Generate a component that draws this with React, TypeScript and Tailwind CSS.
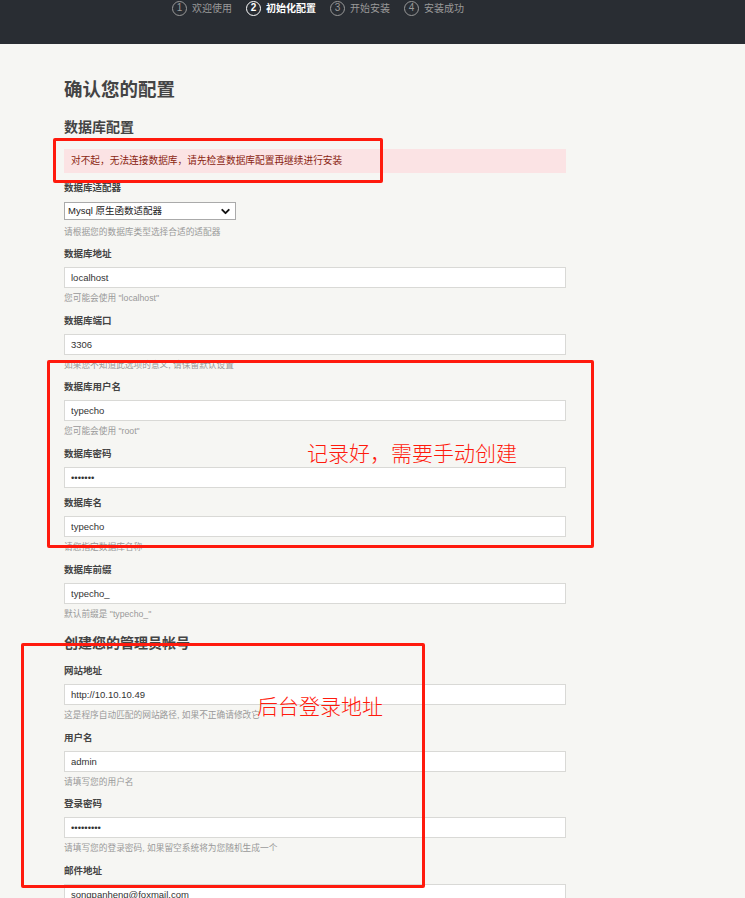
import { ChevronDown } from "lucide-react";

interface Field {
  label: string;
  value: string;
  desc?: string;
  password?: boolean;
}

const dbFields: Field[] = [
  { label: "数据库地址", value: "localhost", desc: '您可能会使用 "localhost"' },
  { label: "数据库端口", value: "3306", desc: "如果您不知道此选项的意义, 请保留默认设置" },
  { label: "数据库用户名", value: "typecho", desc: '您可能会使用 "root"' },
  { label: "数据库密码", value: "1234567", password: true },
  { label: "数据库名", value: "typecho", desc: "请您指定数据库名称" },
  { label: "数据库前缀", value: "typecho_", desc: '默认前缀是 "typecho_"' },
];

const adminFields: Field[] = [
  { label: "网站地址", value: "http://10.10.10.49", desc: "这是程序自动匹配的网站路径, 如果不正确请修改它" },
  { label: "用户名", value: "admin", desc: "请填写您的用户名" },
  { label: "登录密码", value: "123456789", password: true, desc: "请填写您的登录密码, 如果留空系统将为您随机生成一个" },
  { label: "邮件地址", value: "songpanheng@foxmail.com" },
];

const steps = ["欢迎使用", "初始化配置", "开始安装", "安装成功"];

function FormField({ field }: { field: Field }) {
  return (
    <div className="flex flex-col pb-[8.5px]">
      <label className="h-[14px] text-[9.5px] leading-[14px] font-bold text-[#444]">{field.label}</label>
      <input
        readOnly
        type={field.password ? "password" : "text"}
        value={field.value}
        className="mt-[6px] h-[21px] w-full border border-[#d9d9d6] bg-white px-[6px] text-[9.5px] text-[#333] outline-none"
      />
      {field.desc && (
        <p className="mt-[3px] h-[14px] text-[8.7px] leading-[14px] text-[#999]">{field.desc}</p>
      )}
    </div>
  );
}

export default function App() {
  return (
    <div
      className="relative min-h-[898px] bg-[#f6f6f3]"
      style={{ fontFamily: '"Liberation Sans", "Noto Sans CJK SC", sans-serif' }}
    >
      <div className="h-[44px] bg-[#292d33]">
        <ol className="flex pl-[172px] text-[10px]">
          {steps.map((s, i) => {
            const active = i === 1;
            return (
              <li
                key={s}
                className={`mr-[14px] flex h-[16px] items-center gap-[5px] ${active ? "font-bold text-white" : "text-[#999]"}`}
              >
                <span
                  className={`flex h-[15px] w-[15px] items-center justify-center rounded-full border text-[10px] leading-none ${active ? "border-white" : "border-[#999]"}`}
                >
                  {i + 1}
                </span>
                {s}
              </li>
            );
          })}
        </ol>
      </div>

      <div className="ml-[64px] w-[502px] pt-[33px]">
        <h1 className="h-[26px] text-[18.5px] leading-[26px] font-bold text-[#444]">确认您的配置</h1>
        <h2 className="mt-[14px] h-[20px] text-[14px] leading-[20px] font-bold text-[#444]">数据库配置</h2>
        <div className="mt-[12px] flex h-[24px] items-center bg-[#fbe3e4] pl-[7px] text-[9.7px] text-[#8a1f11]">
          对不起，无法连接数据库，请先检查数据库配置再继续进行安装
        </div>

        <div className="mt-[8px] flex flex-col pb-2">
          <label className="h-[14px] text-[9.5px] leading-[14px] font-bold text-[#444]">数据库适配器</label>
          <div className="mt-[7px] flex h-[18px] w-[172px] items-center justify-between border border-[#aaa] bg-white pl-[3px] pr-[3px] text-[9.5px] text-[#222]">
            <span>Mysql 原生函数适配器</span>
            <ChevronDown size={13} strokeWidth={3.5} className="text-[#111]" />
          </div>
          <p className="mt-[5px] h-[14px] text-[8.7px] leading-[14px] text-[#999]">请根据您的数据库类型选择合适的适配器</p>
        </div>

        {dbFields.map((f) => (
          <FormField key={f.label} field={f} />
        ))}

        <h2 className="mt-[4px] h-[20px] text-[14px] leading-[20px] font-bold text-[#444]">创建您的管理员帐号</h2>
        <div className="mt-[11px]">
          {adminFields.map((f) => (
            <FormField key={f.label} field={f} />
          ))}
        </div>
      </div>

      {/* annotations drawn over the screenshot */}
      <div className="absolute left-[53px] top-[138px] h-[45px] w-[330px] rounded-[2px] border-[3px] border-[#ff1a0d]" />
      <div className="absolute left-[47px] top-[360px] h-[188px] w-[547px] rounded-[2px] border-[3px] border-[#ff1a0d]" />
      <div className="absolute left-[21px] top-[643px] h-[245px] w-[404px] rounded-[2px] border-[3px] border-[#ff1a0d]" />
      <div
        className="absolute left-[307px] top-[439px] text-[21px] leading-[26px] text-[#ff1a0d]"
        style={{ fontFamily: '"Noto Sans CJK SC", sans-serif', fontWeight: 300 }}
      >
        记录好，需要手动创建
      </div>
      <div
        className="absolute left-[257px] top-[692px] text-[21px] leading-[26px] text-[#ff1a0d]"
        style={{ fontFamily: '"Noto Sans CJK SC", sans-serif', fontWeight: 300 }}
      >
        后台登录地址
      </div>
    </div>
  );
}
